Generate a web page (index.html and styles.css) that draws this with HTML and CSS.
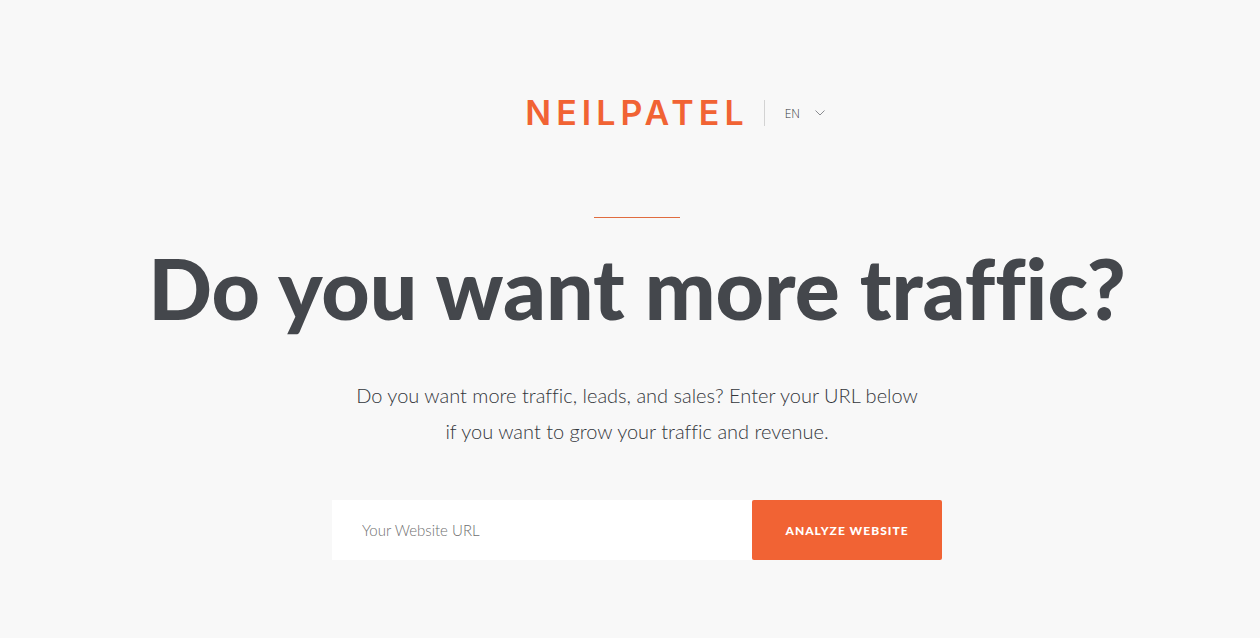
FILE: index.html
```html
<!DOCTYPE html>
<html lang="en">
<head>
    <meta charset="UTF-8">
    <meta name="viewport" content="width=device-width, initial-scale=1.0">
    <title>Neil Patel</title>
    <link rel="stylesheet" href="styles.css">
</head>
<body>

<header class="header">
    <a class="logo" href="#">NEILPATEL</a>
    <div class="language">
        <select class="language-select" aria-label="Language">
            <option>EN</option>
        </select>
        <svg class="chevron" width="10" height="6" viewBox="0 0 10 6" fill="none" stroke="#8a8c90" aria-hidden="true">
            <path d="M0.5 0.5 L5 5 L9.5 0.5"/>
        </svg>
    </div>
</header>

<main class="hero">
    <div class="line"></div>
    <h1>Do you want more traffic?</h1>
    <p class="intro">Do you want more traffic, leads, and sales? Enter your URL below if you want to grow your traffic and revenue.</p>
    <form class="url-form">
        <input class="url-input" type="text" aria-label="Your Website URL" placeholder="Your Website URL">
        <button class="url-button" type="submit">ANALYZE WEBSITE</button>
    </form>
</main>

</body>
</html>
```
FILE: styles.css
```css
* {
    margin: 0;
    padding: 0;
    box-sizing: border-box;
}

body {
    padding: 100px 0 40px 14px;
    background: #f8f8f8;
    color: #44474c;
    font-family: Lato, sans-serif;
    font-variant-ligatures: none;
}

/* logo stays centered, language sits to its right */
.header {
    display: grid;
    grid-template-columns: 1fr auto 1fr;
    align-items: center;
}

.logo {
    grid-column: 2;
    color: #f16334;
    font-family: Inter, sans-serif;
    font-size: 34px;
    font-weight: 600;
    line-height: 26px;
    letter-spacing: 5px;
    text-decoration: none;
}

.language {
    display: flex;
    align-items: center;
    justify-self: start;
    height: 26px;
    margin-left: 15px;
    padding-left: 20px;
    border-left: 1px solid #d3d3d3;
}

.language-select {
    appearance: none;
    border: none;
    outline: none;
    background: transparent;
    color: #33363b;
    font-family: "Open Sans", sans-serif;
    font-size: 12px;
    font-weight: 300;
    cursor: pointer;
}

.chevron {
    margin-left: 14px;
    pointer-events: none;
}

.hero {
    display: flex;
    flex-direction: column;
    align-items: center;
    padding-top: 91px;
    text-align: center;
}

.line {
    width: 86px;
    height: 1px;
    background: #e06c3f;
}

h1 {
    margin-top: 20px;
    font-size: 84px;
    font-weight: 900;
    line-height: 100px;
}

.intro {
    max-width: 570px;
    margin-top: 39px;
    color: #33363b;
    font-size: 20px;
    font-weight: 300;
    line-height: 36px;
}

.url-form {
    display: flex;
    width: 100%;
    max-width: 610px;
    margin-top: 51px;
}

.url-input {
    flex: 1;
    min-width: 0;
    height: 60px;
    padding: 0 30px;
    border: none;
    outline: none;
    background: #fff;
    color: #44474c;
    font-family: Lato, sans-serif;
    font-size: 15px;
    font-weight: 300;
}

.url-input::placeholder {
    color: #707070;
}

.url-button {
    width: 190px;
    height: 60px;
    border: none;
    border-radius: 2px;
    background: #f16334;
    color: #fff;
    font-family: Lato, sans-serif;
    font-size: 12px;
    font-weight: 900;
    letter-spacing: 1px;
    cursor: pointer;
}
```
